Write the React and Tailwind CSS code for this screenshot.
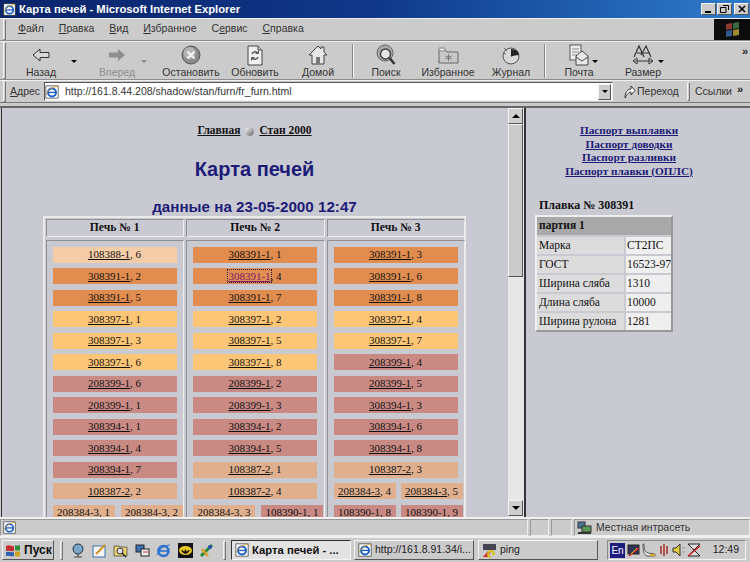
import React from "react";

const Raised = "border border-t-[#f4f4f4] border-l-[#f4f4f4] border-r-[#555] border-b-[#555]";

const Svg = ({ w = 24, h = 24, vb, children, cls = "" }) => (
  <svg width={w} height={h} viewBox={vb || `0 0 ${w} ${h}`} className={"block shrink-0 " + cls}>{children}</svg>
);

const IeIcon = ({ s = 14 }) => (
  <Svg w={s} h={s} vb="0 0 16 16">
    <rect x="1" y="1" width="14" height="14" fill="#fff" stroke="#333" strokeWidth="0.8" />
    <circle cx="8" cy="8.5" r="4.6" fill="none" stroke="#1c5fc4" strokeWidth="2.2" />
    <path d="M4 8.5h8" stroke="#1c5fc4" strokeWidth="1.6" />
    <path d="M1 11C5 4 11 1 15 2" fill="none" stroke="#d8a020" strokeWidth="1" />
  </Svg>
);

const icons = {
  back: (
    <Svg w={20} h={18}>
      <path d="M9 3L2 9l7 6v-3.5h9v-5H9z" fill="#d8d8d8" stroke="#333" strokeWidth="1" />
    </Svg>
  ),
  forward: (
    <Svg w={20} h={18}>
      <path d="M11 3l7 6-7 6v-3.5H2v-5h9z" fill="#8f8f8f" />
    </Svg>
  ),
  stop: (
    <Svg w={20} h={20}>
      <circle cx="10" cy="10" r="9" fill="#8c8c8c" stroke="#555" />
      <circle cx="8.5" cy="8" r="6" fill="#b4b4b4" />
      <path d="M6.5 6.5l7 7M13.5 6.5l-7 7" stroke="#f4f4f4" strokeWidth="2.2" />
    </Svg>
  ),
  refresh: (
    <Svg w={18} h={22}>
      <path d="M2 2h10l4 4v15H2z" fill="#f0f0f0" stroke="#444" />
      <path d="M12 2v4h4" fill="#ccc" stroke="#444" />
      <path d="M6 10a3.5 3.5 0 0 1 6-1M12 13a3.5 3.5 0 0 1-6 1" fill="none" stroke="#555" strokeWidth="1.4" />
      <path d="M12.5 6.5v3h-3M5.5 16.500v-3h3" fill="none" stroke="#555" />
    </Svg>
  ),
  home: (
    <Svg w={20} h={20}>
      <path d="M10 1L1 10h3v9h12v-9h3l-3-3V2h-3v2z" fill="#e6e6e6" stroke="#444" />
      <rect x="8" y="12" width="4" height="7" fill="#777" />
    </Svg>
  ),
  search: (
    <Svg w={21} h={22}>
      <circle cx="9" cy="9" r="8" fill="#a8a8a8" stroke="#666" />
      <circle cx="9.500" cy="10" r="5" fill="#e6e6e6" stroke="#444" strokeWidth="1.500" />
      <path d="M13.500 14l5 6" stroke="#333" strokeWidth="2.500" />
    </Svg>
  ),
  fav: (
    <Svg w={21} h={18}>
      <path d="M1 4h6l2 2h11v11H1z" fill="#c8c8c8" stroke="#666" />
      <path d="M1 2h6v3H1z" fill="#e4e4e4" stroke="#888" />
      <path d="M10.500 8v7M7.500 10l6 3M13.500 10l-6 3" stroke="#777" strokeWidth="1" />
    </Svg>
  ),
  hist: (
    <Svg w={21} h={20}>
      <circle cx="10" cy="11" r="8" fill="#d8d8d8" stroke="#555" />
      <path d="M10 11V4a8 8 0 0 1 8 6z" fill="#222" />
      <path d="M10 11l7-4" stroke="#222" strokeWidth="1.500" />
      <path d="M3 3l3 3M2 8l3 1" stroke="#666" />
    </Svg>
  ),
  mail: (
    <Svg w={20} h={22}>
      <rect x="1" y="1" width="11" height="15" fill="#eee" stroke="#555" />
      <path d="M3 5h7M3 8h7M3 11h5" stroke="#888" />
      <path d="M7 12l6-5 6 5v9H7z" fill="#e8e8e8" stroke="#444" />
      <path d="M7 13l6 4 6-4" fill="none" stroke="#444" />
    </Svg>
  ),
  size: (
    <Svg w={24} h={22}>
      <path d="M3 13L8 2l5 11M6 9h5M10 11l5-9 5 11M12 9h7" fill="none" stroke="#333" strokeWidth="1.200" />
      <path d="M2 17h20M2 17l4-3v6zM22 17l-4-3v6z" fill="#fff" stroke="#333" />
    </Svg>
  ),
};

const tools = [
  ["Назад", "back", "w-[66px]", false, "-right-[3px]"],
  ["Вперед", "forward", "w-[56px] ml-[15px]", true, "-right-[2px]"],
  ["Остановить", "stop", "w-[70px] ml-[11px]"],
  ["Обновить", "refresh", "w-[58px]"],
  ["Домой", "home", "w-[68px]"],
  ["Поиск", "search", "w-[64px]"],
  ["Избранное", "fav", "w-[60px]"],
  ["Журнал", "hist", "w-[66px]"],
  ["Почта", "mail", "w-[66px]", false, "right-[14px]"],
  ["Размер", "size", "w-[62px]", false, "right-[10px]"],
];

const Grip = () => <div className="w-[3px] h-full border border-t-[#f4f4f4] border-l-[#f4f4f4] border-r-[#777] border-b-[#777] shrink-0" />;
const Sep = () => <div className="w-[2px] h-[34px] self-center border-l border-l-[#888] border-r border-r-[#f4f4f4] shrink-0" />;
const Caret = ({ cls = "", color = "border-t-black" }) => (
  <span className={"block w-0 h-0 border-x-[3px] border-x-transparent border-t-[3px] " + color + " " + cls} />
);

const C = {
  peach: "bg-[#f5cda8]",
  orange: "bg-[#e28d50]",
  yellow: "bg-[#fdc676]",
  rose: "bg-[#c98a84]",
  tan: "bg-[#e0b08e]",
};

const col1 = [
  ["108388-1", 6, C.peach], ["308391-1", 2, C.orange], ["308391-1", 5, C.orange], ["308397-1", 1, C.yellow],
  ["308397-1", 3, C.yellow], ["308397-1", 6, C.yellow], ["208399-1", 6, C.rose], ["208399-1", 1, C.rose],
  ["308394-1", 1, C.rose], ["308394-1", 4, C.rose], ["308394-1", 7, C.rose], ["108387-2", 2, C.tan],
];
const col2 = [
  ["308391-1", 1, C.orange], ["308391-1", 4, C.orange, true], ["308391-1", 7, C.orange], ["308397-1", 2, C.yellow],
  ["308397-1", 5, C.yellow], ["308397-1", 8, C.yellow], ["208399-1", 2, C.rose], ["208399-1", 3, C.rose],
  ["308394-1", 2, C.rose], ["308394-1", 5, C.rose], ["108387-2", 1, C.tan], ["108387-2", 4, C.tan],
];
const col3 = [
  ["308391-1", 3, C.orange], ["308391-1", 6, C.orange], ["308391-1", 8, C.orange], ["308397-1", 4, C.yellow],
  ["308397-1", 7, C.yellow], ["208399-1", 4, C.rose], ["208399-1", 5, C.rose], ["308394-1", 3, C.rose],
  ["308394-1", 6, C.rose], ["308394-1", 8, C.rose], ["108387-2", 3, C.tan],
];

const Label = ({ id, n, active }) => (
  <span className="text-[#111] whitespace-nowrap">
    <span className={active ? "underline text-[#7a1a6a] outline-1 outline-dotted outline-[#224]" : "underline"}>{id}</span>, {n}
  </span>
);

const Rows = ({ items }) =>
  items.map(([id, n, c, a]) => (
    <div key={id + n} className={"h-4 w-[124px] flex items-center justify-center shrink-0 " + c}>
      <Label id={id} n={n} active={a} />
    </div>
  ));

const Half = ({ id, n, c, w = "w-[62px]" }) => (
  <div className={"h-4 flex items-center justify-center shrink-0 " + w + " " + c}>
    <Label id={id} n={n} />
  </div>
);

const Head = ({ children, w }) => (
  <div className={"h-[18px] flex items-center justify-center font-bold text-[11.6px] border border-[#8f8f96] border-r-[#eee] border-b-[#eee] shrink-0 " + w}>{children}</div>
);

const Body = ({ children, w, pl }) => (
  <div className={"h-[290px] flex flex-col gap-[5.5px] pt-[5.5px] border border-[#8f8f96] border-r-[#eee] border-b-[#eee] shrink-0 " + w + " " + pl}>{children}</div>
);

const ScrollBtn = ({ up }) => (
  <div className={"h-4 w-[15px] bg-[#cfcfcf] flex items-center justify-center shrink-0 " + Raised}>
    <span className={"block w-0 h-0 border-x-[4px] border-x-transparent " + (up ? "border-b-[4px] border-b-black" : "border-t-[4px] border-t-black")} />
  </div>
);

const info = [["Марка", "СТ2ПС"], ["ГОСТ", "16523-97"], ["Ширина сляба", "1310"], ["Длина сляба", "10000"], ["Ширина рулона", "1281"]];

const trayColors = [
  <Svg w={13} h={14} key="a"><rect x="1" y="2" width="11" height="9" fill="#335" stroke="#222" /><path d="M2 13L12 5" stroke="#d02020" strokeWidth="1.500" /><path d="M4 11l6-6" stroke="#e0c020" /></Svg>,
  <Svg w={14} h={14} key="b"><path d="M2 1c0 6 1 8 4 9l7 1v2H5C2 12 1 8 1 1z" fill="#eee" stroke="#555" /><path d="M8 11h5v2H8z" fill="#d8b020" /></Svg>,
  <Svg w={12} h={14} key="c"><path d="M6 1v12M3 3v8M9 3v8" stroke="#a03020" strokeWidth="1.500" /></Svg>,
  <Svg w={13} h={14} key="d"><path d="M1 5h3l4-4v12L4 9H1z" fill="#e8d040" stroke="#333" /><path d="M10 5h3M10 9h3" stroke="#999" /></Svg>,
  <Svg w={14} h={14} key="e"><path d="M1 1h12L7 7zM1 13h12L7 7z" fill="#ddd" stroke="#222" /><path d="M1 13L13 3" stroke="#d02020" strokeWidth="1.500" /></Svg>,
];

const quick = [
  <Svg w={14} h={15} key="1"><circle cx="7" cy="6" r="5" fill="#7aa7c8" stroke="#234" /><path d="M3 14h8M7 11v3" stroke="#444" /></Svg>,
  <Svg w={15} h={15} key="2"><rect x="1" y="3" width="12" height="11" fill="#f4f4f4" stroke="#3a70b0" /><path d="M4 11L13 2" stroke="#d09020" strokeWidth="2" /></Svg>,
  <Svg w={15} h={15} key="3"><path d="M1 3h5l1 1h7v9H1z" fill="#e8d070" stroke="#665" /><circle cx="7" cy="8" r="3" fill="#dde" stroke="#333" /><path d="M9 10l4 4" stroke="#222" strokeWidth="1.500" /></Svg>,
  <Svg w={15} h={15} key="4"><rect x="1" y="2" width="8" height="7" fill="#3a70b0" stroke="#222" /><rect x="6" y="6" width="8" height="7" fill="#eee" stroke="#222" /><path d="M8 9h5" stroke="#d03030" /></Svg>,
  <Svg w={15} h={15} key="5"><circle cx="7.500" cy="8" r="5" fill="none" stroke="#2a70d0" strokeWidth="2.500" /><path d="M3 8h9" stroke="#2a70d0" strokeWidth="1.600" /><path d="M1 12C4 5 9 2 14 2" fill="none" stroke="#2a70d0" /></Svg>,
  <Svg w={15} h={15} key="6"><rect width="15" height="15" fill="#111" /><ellipse cx="7.500" cy="7.500" rx="6.500" ry="4.500" fill="#e8c820" /><path d="M3 7c2 0 3 1 3 2l1.500-3 1.500 3c0-1 1-2 3-2-1 2-2 3-4.500 4C5 10 4 9 3 7z" fill="#111" /></Svg>,
  <Svg w={15} h={15} key="7"><path d="M2 13L13 2" stroke="#2a8a3a" strokeWidth="3" /><path d="M3 6l6 7" stroke="#d8a020" strokeWidth="2.500" /><circle cx="11" cy="4" r="2" fill="#2a50b0" /></Svg>,
];

export default function App() {
  return (
    <div className="w-[750px] h-[562px] overflow-hidden flex flex-col bg-[#cbcbcb] text-[10.5px] text-[#222] font-['Liberation_Sans',Arial,sans-serif]">
      {/* title bar */}
      <div className="h-[18px] shrink-0 flex items-center pl-[3px] pr-[1px] bg-gradient-to-r from-[#0a246a] via-[#10388a] to-[#2f7ccc] text-white font-bold text-[11.25px]">
        <IeIcon s={13} />
        <span className="ml-[3px] whitespace-nowrap">Карта печей - Microsoft Internet Explorer</span>
        <div className="ml-auto flex gap-[1px]">
          <div className={"w-[15px] h-[12px] bg-[#cbcbcb] flex items-end pb-[1px] pl-[3px] " + Raised}><span className="block w-[6px] h-[2px] bg-black" /></div>
          <div className={"w-[15px] h-[12px] bg-[#cbcbcb] flex items-center justify-center " + Raised}>
            <Svg w={9} h={8}><path d="M3 .5h5.500V5M.5 2.500H6v5H.5z" fill="none" stroke="#000" /></Svg>
          </div>
          <div className={"w-[15px] h-[12px] ml-[1px] bg-[#cbcbcb] flex items-center justify-center " + Raised}>
            <Svg w={8} h={8}><path d="M1 1l6 6M7 1l-6 6" stroke="#000" strokeWidth="1.500" /></Svg>
          </div>
        </div>
      </div>

      {/* menu */}
      <div className="h-[23px] shrink-0 flex items-center pl-[3px] border-y border-t-[#f0f0f0] border-b-[#8c8c8c]">
        <Grip />
        <div className="flex gap-[15px] ml-[12px] mb-[2px] text-[#333]">
          <span><u>Ф</u>айл</span><span><u>П</u>равка</span><span><u>В</u>ид</span><span><u>И</u>збранное</span><span>С<u>е</u>рвис</span><span><u>С</u>правка</span>
        </div>
        <div className="ml-auto w-[36px] h-[21px] bg-[#0c0c0c] flex items-center justify-center">
          <div className="grid grid-cols-2 gap-[1px] w-[13px] h-[13px] skew-y-[-8deg]">
            <span className="bg-[#8a3a30]" /><span className="bg-[#3a6a40]" /><span className="bg-[#305a8a]" /><span className="bg-[#a08a30]" />
          </div>
        </div>
      </div>

      {/* toolbar */}
      <div className="h-[39px] shrink-0 flex items-stretch pl-[3px] border-t border-t-[#f0f0f0] border-b border-b-[#8c8c8c] relative">
        <Grip />
        <div className="flex items-stretch ml-[2px]">
          {tools.map(([label, ic, w, dis, caret], i) => (
            <React.Fragment key={label}>
              {(i === 5 || i === 8) && <Sep />}
              <div className={"relative flex flex-col items-center justify-between pt-[2px] pb-[2px] shrink-0 " + w}>
                <div className="h-[22px] flex items-center justify-center">{icons[ic]}</div>
                <span className={dis ? "text-[#8e8e8e] leading-none" : "leading-none text-[#333]"}>{label}</span>
                {caret && <Caret cls={"absolute top-[18px] " + caret} color={dis ? "border-t-[#888]" : "border-t-black"} />}
              </div>
            </React.Fragment>
          ))}
        </div>
        <span className="absolute right-[2px] top-[1px] font-bold text-[#222] text-[11px]">»</span>
      </div>

      {/* address */}
      <div className="h-[23px] shrink-0 flex items-center pl-[3px] border-t border-t-[#f0f0f0] border-b border-b-[#777]">
        <Grip />
        <span className="ml-[4px] w-[34px] shrink-0 text-[#333]"><u>А</u>дрес</span>
        <div className="w-[569px] h-[19px] bg-white flex items-center border border-t-[#555] border-l-[#555] border-b-[#eee] border-r-[#eee] shrink-0">
          <IeIcon s={14} />
          <span className="ml-[6px] text-[#333] whitespace-nowrap">http://161.8.44.208/shadow/stan/furn/fr_furn.html</span>
          <div className={"ml-auto w-[13px] h-[16px] mr-[1px] bg-[#cbcbcb] flex items-center justify-center " + Raised}><Caret color="border-t-black" /></div>
        </div>
        <div className="flex items-center gap-[1px] ml-[10px] w-[64px] shrink-0 text-[#333]">
          <Svg w={13} h={14}><path d="M2 13C2 7 5 4 8 4V1l4 4.500L8 10V7C6 7 4 9 2 13z" fill="#fff" stroke="#333" /></Svg>
          <span>Переход</span>
        </div>
        <div className="h-[19px] w-[3px] border border-t-[#f4f4f4] border-l-[#f4f4f4] border-r-[#777] border-b-[#777] shrink-0" />
        <span className="ml-[5px] text-[#333]">Ссылки</span>
        <span className="ml-[5px] font-bold leading-none mb-[4px] text-[11px]">»</span>
      </div>

      <div className="h-[3px] shrink-0" />

      {/* frames */}
      <div className="h-[411px] shrink-0 flex border-t-2 border-t-[#666] font-['Liberation_Serif','Times_New_Roman',serif] text-[11px] text-[#111] overflow-hidden">
        <div className="w-[507px] ml-[1px] border-l border-l-[#333] bg-[#c9c9d1] overflow-hidden flex flex-col items-center shrink-0">
          <div className="mt-[17px] h-[12px] flex items-center gap-[5px] font-bold text-[11.5px] -ml-[1px]">
            <u>Главная</u>
            <span className="block w-[9px] h-[9px] rounded-full bg-gradient-to-br from-white to-[#666]" />
            <u>Стан 2000</u>
          </div>
          <h1 className="mt-[19px] -ml-[1px] h-[26px] text-[20px] leading-[26px] font-bold text-[#1c1c78] font-['Liberation_Sans',Arial,sans-serif]">Карта печей</h1>
          <h2 className="mt-[16px] -ml-[1px] h-[18px] text-[15.2px] leading-[18px] font-bold text-[#1c1c78] font-['Liberation_Sans',Arial,sans-serif] whitespace-nowrap">данные на 23-05-2000 12:47</h2>
          <div className="-ml-[2px] w-[423px] border-t-2 border-x-2 border-[#eaeaea] flex flex-col gap-[3px] pt-[1px] px-[1px] shrink-0">
            <div className="flex gap-[2px]">
              <Head w="w-[138.5px]">Печь № 1</Head>
              <Head w="w-[138.5px]">Печь № 2</Head>
              <Head w="w-[138.5px]">Печь № 3</Head>
            </div>
            <div className="flex gap-[2px]">
              <Body w="w-[138.5px]" pl="pl-[6px]">
                <Rows items={col1} />
                <div className="flex gap-[6px]">
                  <Half id="208384-3" n={1} c={C.tan} /><Half id="208384-3" n={2} c={C.tan} />
                </div>
              </Body>
              <Body w="w-[138.5px]" pl="pl-[6px]">
                <Rows items={col2} />
                <div className="flex gap-[6px]">
                  <Half id="208384-3" n={3} c={C.tan} /><Half id="108390-1" n={1} c={C.rose} />
                </div>
              </Body>
              <Body w="w-[138.5px]" pl="pl-[6px]">
                <Rows items={col3} />
                <div className="flex gap-[5px]">
                  <Half id="208384-3" n={4} c={C.tan} /><Half id="208384-3" n={5} c={C.tan} />
                </div>
                <div className="flex gap-[5px]">
                  <Half id="108390-1" n={8} c={C.rose} /><Half id="108390-1" n={9} c={C.rose} />
                </div>
              </Body>
            </div>
          </div>
        </div>

        {/* scrollbar */}
        <div className="w-[16px] flex flex-col bg-[#e8e8e8] shrink-0">
          <ScrollBtn up />
          <div className={"h-[153px] w-[15px] bg-[#cbcbcb] shrink-0 " + Raised} />
          <div className="flex-1" />
          <ScrollBtn />
          <div className="h-[1px]" />
        </div>
        <div className="w-[2px] bg-[#333] shrink-0" />

        {/* right frame */}
        <div className="flex-1 bg-[#c9c9d1] flex flex-col overflow-hidden">
          <div className="mt-[16px] flex flex-col items-center font-bold text-[11.25px] leading-[13.5px] text-[#1c1c78] pr-[18px]">
            <u>Паспорт выплавки</u><u>Паспорт доводки</u><u>Паспорт разливки</u><u>Паспорт плавки (ОПЛС)</u>
          </div>
          <div className="mt-[20px] ml-[13px] h-[15px] leading-[15px] font-bold text-[12px]">Плавка № 308391</div>
          <div className="mt-[2px] ml-[9px] w-[138px] border-2 border-t-[#eee] border-l-[#eee] border-r-[#999] border-b-[#999] flex flex-col gap-[2px] text-[11.5px]">
            <div className="h-[18px] bg-[#a9a9a9] font-bold pl-[2px] flex items-center">партия 1</div>
            {info.map(([a, b]) => (
              <div key={a} className="flex gap-[2px] h-[17px]">
                <div className="w-[87px] bg-[#dcdcdc] pl-[2px] flex items-center whitespace-nowrap">{a}</div>
                <div className="flex-1 bg-[#efefef] pl-[1px] flex items-center whitespace-nowrap overflow-hidden">{b}</div>
              </div>
            ))}
          </div>
        </div>
      </div>

      {/* status bar */}
      <div className="h-[19px] shrink-0 flex items-stretch border-t-2 border-t-[#f0f0f0] gap-[2px]">
        <div className="w-[528px] pl-[2px] flex items-center border border-t-[#999] border-l-[#999] border-b-[#eee] border-r-[#eee]"><IeIcon s={13} /></div>
        <div className="w-[19px] border border-t-[#999] border-l-[#999] border-b-[#eee] border-r-[#eee]" />
        <div className="w-[21px] border border-t-[#999] border-l-[#999] border-b-[#eee] border-r-[#eee]" />
        <div className="flex-1 flex items-center pl-[2px] gap-[4px] border border-t-[#999] border-l-[#999] border-b-[#eee] border-r-[#eee] text-[#333]">
          <Svg w={15} h={14}><rect x="1" y="1" width="7" height="6" fill="#4a7a9a" stroke="#333" /><rect x="5" y="5" width="9" height="6" fill="#5a9a5a" stroke="#333" /><path d="M1 12h13" stroke="#333" strokeWidth="2" /></Svg>
          <span>Местная интрасеть</span>
        </div>
      </div>

      {/* taskbar */}
      <div className="flex-1 flex items-center pl-[2px] border-t-2 border-t-[#f0f0f0]">
        <div className={"w-[52px] h-[20px] flex items-center gap-[2px] pl-[2px] font-bold text-[#111] shrink-0 " + Raised}>
          <Svg w={17} h={14}><path d="M1 3c4-2 6 1 8 0v5C6 9 4 7 1 8z" fill="#c03030" /><path d="M10 2c2 1 3 1 5 0v5c-2 1-3 1-5 0z" fill="#30903a" /><path d="M1 9c3-1 5 1 8 0v4c-3 1-5-1-8 0z" fill="#3060b0" /><path d="M10 8c2 1 3 1 5 0v5c-2 1-3 1-5 0z" fill="#d0a020" /></Svg>
          <span className="text-[12px]">Пуск</span>
        </div>
        <div className="ml-[6px] h-[19px] w-[3px] border border-t-[#f4f4f4] border-l-[#f4f4f4] border-r-[#777] border-b-[#777] shrink-0" />
        <div className="ml-[8px] w-[143px] flex justify-between items-center shrink-0">{quick}</div>
        <div className="ml-[9px] h-[19px] w-[3px] border border-t-[#f4f4f4] border-l-[#f4f4f4] border-r-[#777] border-b-[#777] shrink-0" />
        <div className="ml-[5px] w-[120px] h-[20px] flex items-center gap-[3px] pl-[3px] bg-[#e2e2e2] border border-t-[#333] border-l-[#333] border-r-[#f4f4f4] border-b-[#f4f4f4] font-bold text-[#111] text-[11.25px] shrink-0">
          <IeIcon s={14} /><span className="whitespace-nowrap">Карта печей - ...</span>
        </div>
        <div className={"ml-[3px] w-[120px] h-[20px] flex items-center gap-[3px] pl-[3px] text-[#222] shrink-0 " + Raised}>
          <IeIcon s={14} /><span className="whitespace-nowrap">http://161.8.91.34/i...</span>
        </div>
        <div className={"ml-[4px] w-[120px] h-[20px] flex items-center gap-[3px] pl-[3px] text-[#222] shrink-0 " + Raised}>
          <Svg w={15} h={15}><rect x="1" y="1" width="13" height="6" fill="#445" /><path d="M1 14L6 8h3l-3 6z" fill="#d03030" /><path d="M9 14a3 3 0 1 1 3-3h-2" fill="none" stroke="#d8c020" strokeWidth="1.800" /></Svg>
          <span>ping</span>
        </div>
        <div className="ml-[9px] w-[139px] h-[20px] flex items-center pl-[2px] gap-[2px] border border-t-[#888] border-l-[#888] border-r-[#f4f4f4] border-b-[#f4f4f4] shrink-0">
          <span className="w-[15px] h-[15px] bg-[#1c1c80] text-white flex items-center justify-center text-[10px]">En</span>
          {trayColors}
          <span className="ml-auto mr-[6px] text-[#222]">12:49</span>
        </div>
      </div>
    </div>
  );
}
